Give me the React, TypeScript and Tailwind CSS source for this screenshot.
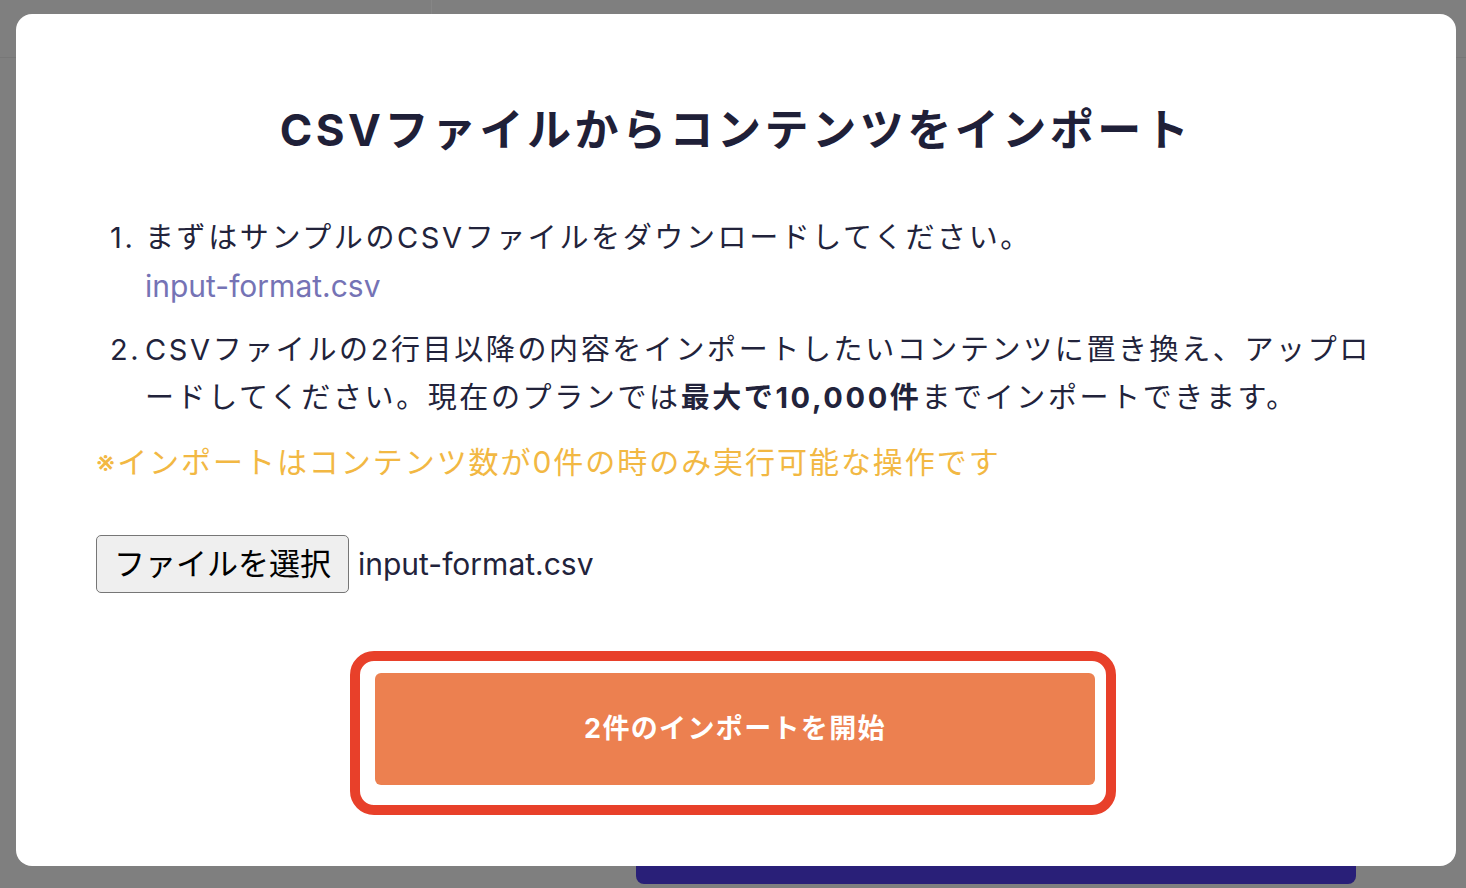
import React from 'react'

const font = { fontFamily: 'Inter, "Noto Sans CJK JP", sans-serif' }

function Step({ n, children }: { n: number; children: React.ReactNode }) {
  return (
    <li className="grid grid-cols-[35px_1fr]">
      <span>{n}.</span>
      <div>{children}</div>
    </li>
  )
}

export default function App() {
  return (
    <div className="relative h-[888px] w-full overflow-hidden bg-[#7f7f7f]" style={font}>
      {/* page behind the overlay */}
      <div className="flex h-[58px] border-b border-[#777777]">
        <div className="w-[432px] border-r border-[#868686]" />
      </div>
      <div className="absolute bottom-[4px] left-[636px] h-[40px] w-[720px] rounded-b-[8px] bg-[#291f78]" />

      {/* modal */}
      <div className="absolute left-[16px] top-[14px] flex h-[852px] w-[1440px] flex-col rounded-[16px] bg-white px-[80px] pt-[84px] text-[#22233b]">
        <h1 className="text-center text-[44px] font-bold leading-[64px] tracking-[0.08em] text-[#1f2038]">
          CSVファイルからコンテンツをインポート
        </h1>

        <ol className="ml-[14px] mt-[52px] flex flex-col gap-[16px] text-[29px] leading-[48px] tracking-[0.09em]">
          <Step n={1}>
            <p>まずはサンプルのCSVファイルをダウンロードしてください。</p>
            <a className="block text-[30px] tracking-normal text-[#7573b5]" href="#">
              input-format.csv
            </a>
          </Step>
          <Step n={2}>
            <p>
              CSVファイルの2行目以降の内容をインポートしたいコンテンツに置き換え、アップロ
              <br />
              ードしてください。現在のプランでは
              <b className="font-bold">最大で10,000件</b>
              までインポートできます。
            </p>
          </Step>
        </ol>

        <p className="mt-[16px] text-[30px] leading-[48px] tracking-[0.065em] text-[#f2b843]">
          <span className="text-[30px]">※</span>インポートはコンテンツ数が0件の時のみ実行可能な操作です
        </p>

        <div className="mt-[49px] flex items-center gap-[9px]">
          <button className="h-[58px] rounded-[5px] border border-[#767676] bg-[#efefef] px-[17px] text-[31px] text-black">
            ファイルを選択
          </button>
          <span className="text-[30px] text-[#22233b]">input-format.csv</span>
        </div>

        <div className="ml-[254px] mt-[58px] self-start rounded-[24px] border-[10px] border-[#e8402a] pb-[20px] pl-[15px] pr-[11px] pt-[12px]">
          <button className="flex h-[112px] w-[720px] items-center justify-center rounded-[6px] bg-[#ec8050] text-[27px] font-bold tracking-[0.05em] text-white">
            2件のインポートを開始
          </button>
        </div>
      </div>
    </div>
  )
}
